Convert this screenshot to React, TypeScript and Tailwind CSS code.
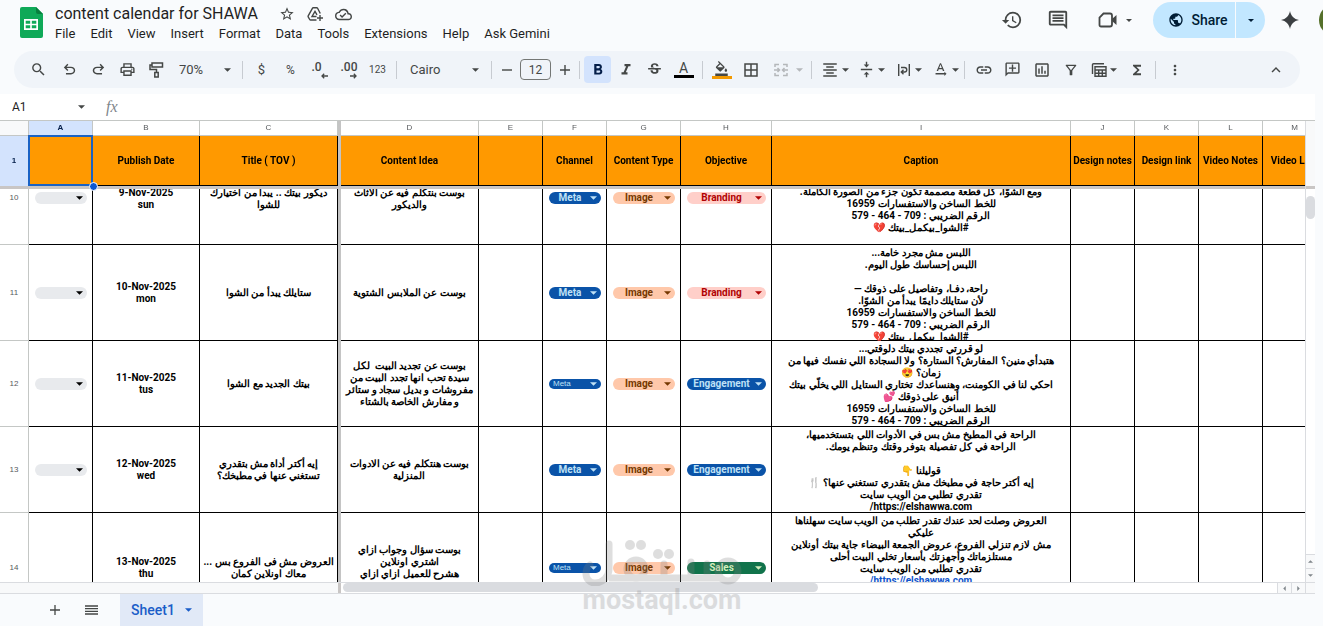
import { useLayoutEffect, useRef, type ReactNode } from "react";
import {
  MdBorderAll,
  MdFormatAlignCenter,
  MdFormatBold,
  MdFormatColorFill,
  MdFormatItalic,
  MdFunctions,
  MdHistory,
  MdKeyboardArrowUp,
  MdLink,
  MdMoreVert,
  MdOutlineAddComment,
  MdOutlineCloudDone,
  MdOutlineComment,
  MdOutlineFilterAlt,
  MdOutlineInsertChart,
  MdOutlinePrint,
  MdPublic,
  MdSearch,
  MdStarOutline,
  MdStrikethroughS,
  MdTextRotationNone,
  MdVerticalAlignCenter,
} from "react-icons/md";

type Tone = "empty" | "meta" | "image" | "branding" | "engagement" | "sales";

const tones: Record<Tone, string> = {
  empty: "bg-[#e8eaed] text-black",
  meta: "bg-[#0a53a8] text-[#bfe1f6]",
  image: "bg-[#ffc8aa] text-[#753800]",
  branding: "bg-[#ffcfc9] text-[#b10202]",
  engagement: "bg-[#0a53a8] text-[#bfe1f6]",
  sales: "bg-[#11734b] text-[#d4edbc]",
};

interface Row {
  id: number;
  height: string;
  date: string;
  title: string;
  idea: string;
  smallMeta?: boolean;
  noStatus?: boolean;
  objective: "Branding" | "Engagement" | "Sales";
  caption: string;
  link?: string;
}

const rows: Row[] = [
  {
    id: 10,
    height: "h-[93px]",
    date: "9-Nov-2025\nsun",
    title: "ديكور بيتك .. يبدأ من اختيارك\nللشوا",
    idea: "بوست بنتكلم فيه عن الاثاث\nوالديكور",
    objective: "Branding",
    caption:
      "ومع الشوّا، كل قطعة مصممة تكون جزء من الصورة الكاملة.\nللخط الساخن والاستفسارات 16959\nالرقم الضريبي : 709 - 464 - 579\n#الشوا_بيكمل_بيتك 💔",
  },
  {
    id: 11,
    height: "h-[96px]",
    date: "10-Nov-2025\nmon",
    title: "ستايلك يبدأ من الشوا",
    idea: "بوست عن الملابس الشتوية",
    objective: "Branding",
    caption:
      "اللبس مش مجرد خامة...\nاللبس إحساسك طول اليوم.\n\nراحة، دفـا، وتفاصيل على ذوقك —\nلأن ستايلك دايمًا يبدأ من الشوّا.\nللخط الساخن والاستفسارات 16959\nالرقم الضريبي : 709 - 464 - 579\n#الشوا_بيكمل_بيتك 💔",
  },
  {
    id: 12,
    height: "h-[86px]",
    date: "11-Nov-2025\ntus",
    title: "بيتك الجديد مع الشوا",
    idea: "بوست عن تجديد البيت  لكل\nسيدة تحب انها تجدد البيت من\nمفروشات و بديل سجاد و ستائر\nو مفارش الخاصة بالشتاء",
    smallMeta: true,
    objective: "Engagement",
    caption:
      "لو قررتي تجددي بيتك دلوقتي...\nهتبدأي منين؟ المفارش؟ الستارة؟ ولا السجادة اللي نفسك فيها من\nزمان؟ 😍\nاحكي لنا في الكومنت، وهنساعدك تختاري الستايل اللي يخلّي بيتك\nأنيق على ذوقك 💕\nللخط الساخن والاستفسارات 16959\nالرقم الضريبي : 709 - 464 - 579",
  },
  {
    id: 13,
    height: "h-[86px]",
    date: "12-Nov-2025\nwed",
    title: "إيه أكتر أداة مش بتقدري\nتستغني عنها في مطبخك؟",
    idea: "بوست هنتكلم فيه عن الادوات\nالمنزلية",
    objective: "Engagement",
    caption:
      "الراحة في المطبخ مش بس في الأدوات اللي بتستخدميها،\nالراحة في كل تفصيلة بتوفر وقتك وتنظم يومك.\n\nقوليلنا 👇\nإيه أكتر حاجة في مطبخك مش بتقدري تستغني عنها؟ 🍴\nتقدري تطلبي من الويب سايت\nhttps://elshawwa.com/",
  },
  {
    id: 14,
    height: "h-[110px]",
    date: "13-Nov-2025\nthu",
    title: "العروض مش فى الفروع بس ...\nمعاك اونلاين كمان",
    idea: "بوست سؤال وجواب ازاي\nاشتري اونلاين\nهشرح للعميل ازاي ازاي\n\u00a0",
    smallMeta: true,
    noStatus: true,
    objective: "Sales",
    caption:
      "العروض وصلت لحد عندك تقدر تطلب من الويب سايت سهلناها\nعليكي\nمش لازم تنزلي الفروع، عروض الجمعة البيضاء جاية بيتك أونلاين\nمستلزماتك وأجهزتك بأسعار تخلي البيت أحلى\nتقدري تطلبي من الويب سايت\n",
    link: "https://elshawwa.com/",
  },
];

const columns = [
  { letter: "A", name: "" },
  { letter: "B", name: "Publish Date" },
  { letter: "C", name: "Title ( TOV )" },
  { letter: "D", name: "Content Idea" },
  { letter: "E", name: "" },
  { letter: "F", name: "Channel" },
  { letter: "G", name: "Content Type" },
  { letter: "H", name: "Objective" },
  { letter: "I", name: "Caption" },
  { letter: "J", name: "Design notes" },
  { letter: "K", name: "Design link" },
  { letter: "L", name: "Video Notes" },
  { letter: "M", name: "Video Link" },
];

const menus = [
  "File",
  "Edit",
  "View",
  "Insert",
  "Format",
  "Data",
  "Tools",
  "Extensions",
  "Help",
  "Ask Gemini",
];

const Caret = ({ className = "" }: { className?: string }) => (
  <svg viewBox="0 0 8 4" className={`w-2 h-1 shrink-0 ${className}`} fill="currentColor">
    <path d="M0 0h8L4 4z" />
  </svg>
);

const Symbol = ({ d }: { d: string }) => (
  <svg viewBox="0 -960 960 960" className="size-[17px]" fill="currentColor">
    <path d={d} />
  </svg>
);

const ToolButton = ({ label, children }: { label: string; children: ReactNode }) => (
  <button
    aria-label={label}
    className="w-[29px] h-7 shrink-0 flex items-center justify-center rounded"
  >
    {children}
  </button>
);

const MenuButton = ({ label, children }: { label: string; children: ReactNode }) => (
  <button
    aria-label={label}
    className="w-[37px] h-7 shrink-0 flex items-center justify-center gap-[3px] rounded"
  >
    {children}
    <Caret className="w-[7px]" />
  </button>
);

const Divider = ({ tight = false }: { tight?: boolean }) => (
  <div className={`w-px h-[18px] shrink-0 bg-[#c7cbd1] ${tight ? "mr-1" : "mx-1"}`} />
);

const Chip = ({
  label,
  value = "",
  tone,
  small = false,
}: {
  label: string;
  value?: string;
  tone: Tone;
  small?: boolean;
}) => (
  <div className={`relative ml-[6px] mr-[5px] rounded-full ${tones[tone]}`}>
    <select
      aria-label={label}
      defaultValue={value}
      className={
        small
          ? "block w-full h-[10px] pl-1 appearance-none bg-transparent font-['Liberation_Sans',sans-serif] text-[8px] leading-[10px] font-normal outline-none"
          : "block w-full h-3 pr-[10px] appearance-none bg-transparent text-center text-[10px] leading-3 font-bold outline-none"
      }
    >
      <option value={value}>{value}</option>
    </select>
    <Caret className="absolute right-1 top-1/2 -translate-y-1/2 w-[7px] pointer-events-none" />
  </div>
);

const Cell = ({
  height,
  align = "items-center",
  dir = "rtl",
  children,
}: {
  height: string;
  align?: string;
  dir?: "rtl" | "ltr";
  children?: ReactNode;
}) => (
  <td className="p-0 border-r border-b border-black">
    <div className={`${height} -mb-px flex justify-center overflow-hidden ${align}`}>
      <div className="whitespace-pre text-center" dir={dir}>
        {children}
      </div>
    </div>
  </td>
);

const ChipCell = ({ children }: { children?: ReactNode }) => (
  <td className="p-0 border-r border-b border-black align-middle">{children}</td>
);

const SheetsLogo = () => (
  <svg viewBox="0 0 24 32" className="w-6 h-8 shrink-0">
    <path d="M2 0h14l7 7v22a2 2 0 0 1-2 2H2a2 2 0 0 1-2-2V2a2 2 0 0 1 2-2z" fill="#0fa958" />
    <path d="M16 0l7 7h-5a2 2 0 0 1-2-2z" fill="#087f3e" />
    <path d="M4 12h14v11H4zM5.700 13.700v3h4.500v-3zM11.800 13.700v3h4.500v-3zM5.700 18.300v3h4.500v-3zM11.800 18.300v3h4.500v-3z" fill="#fff" fillRule="evenodd" />
  </svg>
);

const Header = () => (
  <header className="flex h-[51px] shrink-0 overflow-hidden">
    <div className="pl-5 pt-[7px]">
      <SheetsLogo />
    </div>
    <div className="pl-[11px] pt-[3px]">
      <div className="flex items-center h-[22px] text-[#444746]">
        <h1 className="text-base leading-[22px] text-[#1f1f1f]">content calendar for SHAWA</h1>
        <button aria-label="Star" className="ml-[21px]">
          <MdStarOutline className="size-4" />
        </button>
        <button aria-label="Add shortcut to Drive" className="ml-3">
          <svg viewBox="0 0 16 16" className="size-4" fill="none" stroke="currentColor" strokeWidth="1.400">
            <path d="M9.500 14H3.600a1 1 0 0 1-.9-.5L1.200 10.800a1 1 0 0 1 0-1L5.400 2.300a1 1 0 0 1 .9-.5h3.400a1 1 0 0 1 .9.500L13.300 7.500" />
            <path d="M9.500 10.500H5L8 5.300l2 3.500M13 9v6M10 12h6" />
          </svg>
        </button>
        <button aria-label="Document status" className="ml-3">
          <MdOutlineCloudDone className="size-[17px]" />
        </button>
      </div>
      <nav className="flex gap-[15px] text-[13px] leading-[18px] text-[#1f1f1f]">
        {menus.map((menu) => (
          <button key={menu}>{menu}</button>
        ))}
      </nav>
    </div>
    <div className="ml-auto flex items-center h-10 text-[#444746]">
      <button aria-label="Version history" className="mr-6">
        <MdHistory className="size-[22px]" />
      </button>
      <button aria-label="Comments" className="mr-[29px]">
        <MdOutlineComment className="size-[22px]" />
      </button>
      <button aria-label="Join a call" className="flex items-center gap-2 mr-[21px]">
        <svg viewBox="0 0 20 16" className="w-5 h-4" fill="none" stroke="currentColor" strokeWidth="1.800">
          <path d="M5.500 1.500H12a2 2 0 0 1 2 2v9a2 2 0 0 1-2 2H3a1.500 1.500 0 0 1-1.500-1.500V5.500z" />
          <path d="M14 7l4.500-4v10L14 9z" fill="currentColor" stroke="none" />
        </svg>
        <Caret className="w-[6px] h-[3px]" />
      </button>
      <div className="flex h-9 rounded-full overflow-hidden text-[#001d35] gap-px">
        <button className="w-[82px] pl-2 bg-[#c2e7ff] flex items-center justify-center gap-[7px] text-sm font-medium">
          <MdPublic className="size-4" />
          Share
        </button>
        <button aria-label="Share options" className="w-[29px] bg-[#c2e7ff] flex items-center justify-center">
          <Caret className="w-[6px] h-[3px]" />
        </button>
      </div>
      <button aria-label="Ask Gemini" className="ml-4">
        <svg viewBox="0 0 18 18" className="size-[18px]" fill="#3c4043">
          <path d="M9 0c.9 4.900 4.100 8.100 9 9-4.900.9-8.100 4.100-9 9-.9-4.900-4.100-8.100-9-9 4.900-.9 8.100-4.100 9-9z" />
        </svg>
      </button>
      <div className="w-1 ml-5">
        <div className="size-8 rounded-full bg-[#55702b]" />
      </div>
    </div>
  </header>
);

const Toolbar = () => (
  <div
    role="toolbar"
    className="flex items-center h-[37px] shrink-0 ml-[14px] mr-[23px] px-[10px] rounded-full bg-[#f0f4f9] text-[#444746]"
  >
    <div className="mr-[2px]">
      <ToolButton label="Search the menus">
        <MdSearch className="size-[17px]" />
      </ToolButton>
    </div>
    <ToolButton label="Undo">
      <Symbol d="M280-200v-80h284q63 0 109.500-40T720-420q0-60-46.500-100T564-560H312l104 104-56 56-200-200 200-200 56 56-104 104h252q97 0 169.500 63T800-420q0 94-72.500 157T564-200H280Z" />
    </ToolButton>
    <ToolButton label="Redo">
      <Symbol d="M396-200q-97 0-169.500-63T154-420q0-94 72.500-157T396-640h252L544-744l56-56 200 200-200 200-56-56 104-104H396q-63 0-109.500 40T240-420q0 60 46.500 100T396-280h284v80H396Z" />
    </ToolButton>
    <ToolButton label="Print">
      <MdOutlinePrint className="size-[17px]" />
    </ToolButton>
    <ToolButton label="Paint format">
      <svg viewBox="0 0 16 16" className="size-4" fill="none" stroke="currentColor" strokeWidth="1.500">
        <path d="M3 1h10.500v4H3zM3 3H1v4.500h6.500v3M5.800 10.500h3.400V15H5.800z" />
      </svg>
    </ToolButton>
    <label className="relative flex items-center w-[67px] shrink-0">
      <select aria-label="Zoom" className="w-full pl-2 appearance-none bg-transparent text-[13px] leading-5 outline-none">
        <option>70%</option>
      </select>
      <Caret className="absolute right-[7px] w-[7px] pointer-events-none" />
    </label>
    <Divider />
    <ToolButton label="Format as currency">
      <span className="text-[13px]">$</span>
    </ToolButton>
    <ToolButton label="Format as percent">
      <span className="text-xs">%</span>
    </ToolButton>
    <ToolButton label="Decrease decimal places">
      <span className="flex flex-col items-start w-4 h-4">
        <span className="text-xs leading-[11px] font-medium">.0</span>
        <svg viewBox="0 0 7 6" className="w-[7px] h-[6px] shrink-0 self-end" fill="none" stroke="currentColor" strokeWidth="1.300">
          <path d="M7 3H1M3.200.8L1 3l2.200 2.200" />
        </svg>
      </span>
    </ToolButton>
    <ToolButton label="Increase decimal places">
      <span className="flex flex-col items-start w-4 h-4">
        <span className="text-xs leading-[11px] font-medium">.00</span>
        <svg viewBox="0 0 7 6" className="w-[7px] h-[6px] shrink-0 self-end" fill="none" stroke="currentColor" strokeWidth="1.300">
          <path d="M0 3h6M3.800.8L6 3 3.800 5.200" />
        </svg>
      </span>
    </ToolButton>
    <ToolButton label="More formats">
      <span className="text-[10px]">123</span>
    </ToolButton>
    <Divider />
    <label className="relative flex items-center w-[86px] shrink-0">
      <select aria-label="Font" className="w-full pl-[9px] appearance-none bg-transparent text-[13px] leading-5 outline-none">
        <option>Cairo</option>
      </select>
      <Caret className="absolute right-2 w-[7px] pointer-events-none" />
    </label>
    <Divider />
    <button aria-label="Decrease font size" className="w-[21px] flex items-center justify-center">
      <svg viewBox="0 0 10 10" className="size-[10px]" stroke="currentColor" strokeWidth="1.400">
        <path d="M0 5h10" />
      </svg>
    </button>
    <input
      aria-label="Font size"
      defaultValue="12"
      className="w-[31px] h-[21px] mx-[3px] shrink-0 rounded border border-[#747775] bg-transparent text-center text-xs outline-none"
    />
    <button aria-label="Increase font size" className="w-[21px] flex items-center justify-center">
      <svg viewBox="0 0 10 10" className="size-[10px]" stroke="currentColor" strokeWidth="1.400">
        <path d="M0 5h10M5 0v10" />
      </svg>
    </button>
    <Divider />
    <button
      aria-label="Bold"
      className="w-[27px] h-[27px] shrink-0 flex items-center justify-center rounded bg-[#d3e3fd] text-[#041e49]"
    >
      <MdFormatBold className="size-[18px]" />
    </button>
    <ToolButton label="Italic">
      <MdFormatItalic className="size-[18px]" />
    </ToolButton>
    <ToolButton label="Strikethrough">
      <MdStrikethroughS className="size-[17px]" />
    </ToolButton>
    <ToolButton label="Text color">
      <span className="flex flex-col items-center border-b-[3px] border-black w-5 text-sm leading-[14px]">A</span>
    </ToolButton>
    <Divider />
    <ToolButton label="Fill color">
      <span className="flex flex-col items-center border-b-[3px] border-[#f29900] w-5 h-[18px]">
        <MdFormatColorFill className="size-[17px]" />
      </span>
    </ToolButton>
    <ToolButton label="Borders">
      <MdBorderAll className="size-[18px]" />
    </ToolButton>
    <button
      aria-label="Merge cells"
      className="w-[46px] h-7 shrink-0 flex items-center justify-center gap-2 text-[#b4b7ba]"
    >
      <svg viewBox="0 0 14 14" className="size-[14px]" fill="none" stroke="currentColor" strokeWidth="1.500">
        <path d="M5 1.500H1V4M9 1.500h4V4M5 12.500H1V10M9 12.500h4V10M0 7h5M14 7H9M3.500 5l2 2-2 2M10.500 5l-2 2 2 2" />
      </svg>
      <Caret className="w-[7px]" />
    </button>
    <Divider tight />
    <MenuButton label="Horizontal align">
      <MdFormatAlignCenter className="size-[18px]" />
    </MenuButton>
    <MenuButton label="Vertical align">
      <MdVerticalAlignCenter className="size-[17px]" />
    </MenuButton>
    <MenuButton label="Text wrapping">
      <svg viewBox="0 0 16 16" className="size-4" fill="none" stroke="currentColor" strokeWidth="1.400">
        <path d="M2.700 2v12M13.300 2v12M5 5.500h3.500a2 2 0 0 1 0 4.500H5.500M7.500 7.800L5.300 10l2.200 2.200" />
      </svg>
    </MenuButton>
    <MenuButton label="Text rotation">
      <MdTextRotationNone className="size-[17px]" />
    </MenuButton>
    <Divider tight />
    <ToolButton label="Insert link">
      <MdLink className="size-[18px]" />
    </ToolButton>
    <ToolButton label="Insert comment">
      <MdOutlineAddComment className="size-[17px] -scale-x-100" />
    </ToolButton>
    <ToolButton label="Insert chart">
      <MdOutlineInsertChart className="size-[18px]" />
    </ToolButton>
    <ToolButton label="Create a filter">
      <MdOutlineFilterAlt className="size-4" />
    </ToolButton>
    <MenuButton label="Filter views">
      <svg viewBox="0 0 16 16" className="size-4" fill="none" stroke="currentColor" strokeWidth="1.400">
        <path d="M13 1.700H2.500a1 1 0 0 0-1 1V12M4 4.700h11v9.600H4zM4 8h11M4 11.200h11M7.700 8v6M11.300 8v6" />
      </svg>
    </MenuButton>
    <ToolButton label="Functions">
      <MdFunctions className="size-4" />
    </ToolButton>
    <Divider />
    <ToolButton label="More">
      <MdMoreVert className="size-4" />
    </ToolButton>
    <div className="ml-auto">
      <ToolButton label="Hide the menus">
        <MdKeyboardArrowUp className="size-[18px]" />
      </ToolButton>
    </div>
  </div>
);

const FormulaBar = () => (
  <div className="flex items-center h-[26px] shrink-0 mt-[6px] bg-white text-[#444746]">
    <label className="relative flex items-center w-[86px]">
      <input
        aria-label="Name box"
        defaultValue="A1"
        className="w-full pl-3 bg-transparent text-xs text-[#1f1f1f] outline-none"
      />
      <Caret className="absolute right-[1px] w-[7px]" />
    </label>
    <span className="ml-5 w-5 font-['Liberation_Serif',serif] italic text-base leading-5 text-[#80868b]">fx</span>
    <input aria-label="Formula" className="flex-1 bg-transparent text-xs outline-none" />
  </div>
);

const FreezeBar = () => <td className="p-0 bg-[#c4c4c4]" />;

const Grid = () => {
  const scroller = useRef<HTMLDivElement>(null);

  useLayoutEffect(() => {
    if (scroller.current) scroller.current.scrollTop = 37;
  }, []);

  return (
    <div ref={scroller} className="flex-1 min-w-0 overflow-hidden">
      <table className="table-fixed border-separate border-spacing-0 w-[1327px] bg-white text-[10px] leading-3 font-bold text-black">
        <colgroup>
          <col className="w-[29px]" />
          <col className="w-[64px]" />
          <col className="w-[107px]" />
          <col className="w-[138px]" />
          <col className="w-[3px]" />
          <col className="w-[138px]" />
          <col className="w-[64px]" />
          <col className="w-[64px]" />
          <col className="w-[74px]" />
          <col className="w-[91px]" />
          <col className="w-[299px]" />
          <col className="w-[64px]" />
          <col className="w-[64px]" />
          <col className="w-[64px]" />
          <col className="w-[64px]" />
        </colgroup>
        <thead className="sticky top-0 z-10">
          <tr className="h-[15px] bg-white font-['Liberation_Sans',sans-serif] text-[8px] leading-3 text-[#575a5d]">
            <th className="p-0 border-r border-b border-[#c4c7c5] bg-[#f8f9fa]" />
            {columns.map((col) => [
              <th
                key={col.letter}
                scope="col"
                className={
                  col.letter === "A"
                    ? "p-0 border-r border-b border-[#c4c7c5] bg-[#d3e3fd] text-[#041e49] font-bold"
                    : "p-0 border-r border-b border-[#c4c7c5] font-normal"
                }
              >
                {col.letter}
              </th>,
              col.letter === "C" && <FreezeBar key="freeze" />,
            ])}
          </tr>
          <tr className="h-[50px] bg-[#ff9900]">
            <th
              scope="row"
              className="p-0 border-r border-[#c4c7c5] bg-[#d3e3fd] font-['Liberation_Sans',sans-serif] text-[8px] text-[#041e49]"
            >
              1
            </th>
            {columns.map((col) => [
              col.letter === "A" ? (
                <td key="A" className="relative p-0 border-r border-b border-black">
                  <div className="absolute -inset-px border-2 border-[#1a62c4]" />
                  <div className="absolute -right-[6px] -bottom-[6px] size-[9px] rounded-full border border-white bg-[#0b57d0]" />
                </td>
              ) : (
                <th key={col.letter} scope="col" className="p-0 border-r border-b border-black whitespace-nowrap">
                  {col.name}
                </th>
              ),
              col.letter === "C" && <FreezeBar key="freeze" />,
            ])}
          </tr>
          <tr className="h-[3px]">
            <td colSpan={15} className="p-0 bg-[#c9c6c5]" />
          </tr>
        </thead>
        <tbody>
          {rows.map((row) => (
            <tr key={row.id} className={row.height}>
              <th
                scope="row"
                className="p-0 border-r border-b border-[#c4c7c5] font-['Liberation_Sans',sans-serif] text-[8px] font-normal text-[#575a5d]"
              >
                {row.id}
              </th>
              <ChipCell>{!row.noStatus && <Chip label={`Status, row ${row.id}`} tone="empty" />}</ChipCell>
              <Cell height={row.height} dir="ltr">
                {row.date}
              </Cell>
              <Cell height={row.height}>{row.title}</Cell>
              <FreezeBar />
              <Cell height={row.height}>{row.idea}</Cell>
              <ChipCell />
              <ChipCell>
                <Chip label={`Channel, row ${row.id}`} value="Meta" tone="meta" small={row.smallMeta} />
              </ChipCell>
              <ChipCell>
                <Chip label={`Content type, row ${row.id}`} value="Image" tone="image" />
              </ChipCell>
              <ChipCell>
                <Chip
                  label={`Objective, row ${row.id}`}
                  value={row.objective}
                  tone={row.objective.toLowerCase() as Tone}
                />
              </ChipCell>
              <Cell height={row.height} align={row.id === 10 ? "items-end pb-[11px]" : "items-start pt-[2px]"}>
                {row.caption}
                {row.link && (
                  <a href={row.link} className="text-[#1155cc] underline">
                    {row.link}
                  </a>
                )}
              </Cell>
              <ChipCell />
              <ChipCell />
              <ChipCell />
              <ChipCell />
            </tr>
          ))}
        </tbody>
      </table>
    </div>
  );
};

const ScrollArrow = ({ label, rotate, edge }: { label: string; rotate: string; edge: string }) => (
  <button aria-label={label} className={`flex items-center justify-center shrink-0 bg-[#f8f9fa] text-[#80868b] ${edge}`}>
    <Caret className={`w-[5px] h-[3px] ${rotate}`} />
  </button>
);

const Watermark = () => (
  <div className="absolute left-[581px] bottom-[12px] w-[162px] pointer-events-none text-[#808080] opacity-25">
    <svg viewBox="0 0 162 50" className="w-full h-[50px]" fill="none" stroke="currentColor" strokeWidth="7" strokeLinecap="round">
      <path d="M28 8v25a14 14 0 0 1-14 14A9 9 0 0 1 5 38c0-4 1-7 4-9" />
      <path d="M28 42h112" strokeLinecap="butt" />
      <path d="M83 40V28M110 40V26M126 40V28" />
      <circle cx="55" cy="33" r="9" />
      <circle cx="147" cy="35" r="10" />
      <g fill="currentColor" stroke="none">
        <circle cx="49" cy="9" r="5" />
        <circle cx="60" cy="9" r="5" />
        <circle cx="77" cy="18" r="5" />
        <circle cx="88" cy="18" r="5" />
      </g>
    </svg>
    <div className="text-center text-[27px] leading-7 font-bold">mostaql.com</div>
  </div>
);

const App = () => (
  <div className="relative flex flex-col h-screen overflow-hidden bg-[#f9fbfd] font-[Roboto,'Noto_Sans',sans-serif]">
    <Header />
    <Toolbar />
    <main className="flex flex-col flex-1 min-h-0 mr-2">
      <FormulaBar />
      <div className="flex flex-1 min-h-0 border-t border-[#c4c7c5] bg-white">
        <Grid />
        <div className="flex flex-col w-[10px] shrink-0 border-l border-[#dadce0]">
          <div className="h-[65px] bg-[#f8f9fa]" />
          <div className="h-[3px] bg-[#c9c6c5]" />
          <div className="mt-[7px] h-[23px] rounded-full bg-[#dadce0]" />
          <div className="flex-1" />
          <ScrollArrow label="Scroll up" rotate="rotate-180" edge="h-[14px] border-t border-[#dadce0]" />
          <ScrollArrow label="Scroll down" rotate="" edge="h-[14px] border-t border-[#dadce0]" />
        </div>
      </div>
      <div className="flex h-3 shrink-0 border-y border-[#dadce0] bg-white">
        <div className="w-[338px] bg-[#f8f9fa]" />
        <div className="w-[3px] bg-[#c9c6c5]" />
        <div className="flex-1 px-[2px]">
          <div className="w-[51%] h-[9px] rounded-full bg-[#dadce0]" />
        </div>
        <ScrollArrow label="Scroll left" rotate="rotate-90" edge="w-[14px] border-l border-[#dadce0]" />
        <ScrollArrow label="Scroll right" rotate="-rotate-90" edge="w-[14px] border-l border-[#dadce0]" />
        <div className="w-[10px] border-l border-[#dadce0] bg-[#f8f9fa]" />
      </div>
    </main>
    <footer className="flex items-center h-8 shrink-0 text-[#444746]">
      <button aria-label="Add sheet" className="ml-[50px]">
        <svg viewBox="0 0 10 10" className="size-[10px]" stroke="currentColor" strokeWidth="1.300">
          <path d="M0 5h10M5 0v10" />
        </svg>
      </button>
      <button aria-label="All sheets" className="ml-[25px]">
        <svg viewBox="0 0 13 10" className="w-[13px] h-[10px]" stroke="currentColor" strokeWidth="1.300">
          <path d="M0 1h13M0 3.700h13M0 6.300h13M0 9h13" />
        </svg>
      </button>
      <button className="ml-[22px] w-[83px] h-8 flex items-center justify-center gap-[10px] bg-[#e1e9f7] text-sm font-medium text-[#1a5dc8]">
        Sheet1
        <Caret className="w-[7px]" />
      </button>
    </footer>
    <Watermark />
  </div>
);

export default App;
